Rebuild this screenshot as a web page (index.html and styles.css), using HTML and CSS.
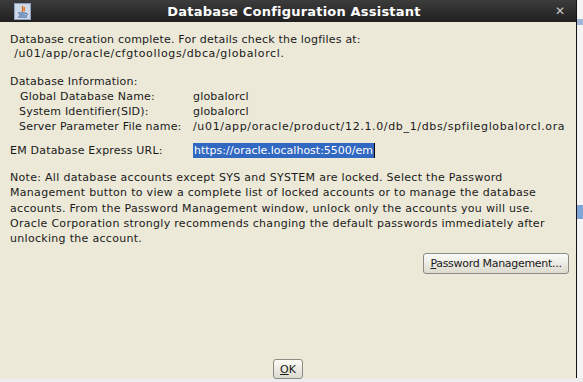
FILE: index.html
```html
<!DOCTYPE html>
<html lang="en">
<head>
  <meta charset="UTF-8" />
  <title>Database Configuration Assistant</title>
  <link rel="stylesheet" href="styles.css">
</head>
<body>

  <div class="screen">
    <div class="window">
      <div class="titlebar">
        <span class="app-icon">
          <svg width="17" height="17" viewBox="0 0 17 17">
            <rect x="0.5" y="0.5" width="16" height="16" fill="#cfd8e6" stroke="#8ea0bd"/>
            <path d="M9 3 C7 5 10 6 8 9 M10.5 4 C9.5 5.5 11 6 10 8" stroke="#e06a14" stroke-width="1.3" fill="none"/>
            <path d="M4 10 H12 M5 12 H11 M4 14 H13" stroke="#2b5a9a" stroke-width="1.2"/>
            <path d="M12 10.5 C14 10.5 14 12.5 11.5 12.5" stroke="#2b5a9a" stroke-width="1" fill="none"/>
          </svg>
        </span>
        <span class="title">Database Configuration Assistant</span>
        <span class="close">&#x2715;</span>
      </div>

      <div class="content">
        <p class="msg">Database creation complete. For details check the logfiles at:<br><span class="path">&nbsp;/u01/app/oracle/cfgtoollogs/dbca/globalorcl.</span></p>

        <div class="info">
          <div class="info-head">Database Information:</div>
          <div class="info-row">
            <span class="info-label first">Global Database Name:</span>
            <span class="info-value">globalorcl</span>
          </div>
          <div class="info-row">
            <span class="info-label">System Identifier(SID):</span>
            <span class="info-value">globalorcl</span>
          </div>
          <div class="info-row">
            <span class="info-label">Server Parameter File name:</span>
            <span class="info-value path">/u01/app/oracle/product/12.1.0/db_1/dbs/spfileglobalorcl.ora</span>
          </div>
        </div>

        <div class="url-row">
          <span class="url-label">EM Database Express URL:</span>
          <span class="url-field">https://oracle.localhost:5500/em</span>
        </div>

        <p class="note">Note: All database accounts except SYS and SYSTEM are locked. Select the Password<br>Management button to view a complete list of locked accounts or to manage the database<br>accounts. From the Password Management window, unlock only the accounts you will use.<br>Oracle Corporation strongly recommends changing the default passwords immediately after<br>unlocking the account.</p>

        <div class="actions">
          <button class="btn btn-pw"><u>P</u>assword Management...</button>
        </div>

        <div class="footer">
          <button class="btn btn-ok"><u>O</u>K</button>
        </div>
      </div>
    </div>
    <div class="behind">
      <div class="behind-strip top"></div>
      <div class="behind-strip mid"></div>
    </div>
  </div>
  <div class="desk"></div>

</body>
</html>
```

FILE: styles.css
```css
* {
  box-sizing: border-box;
}

body {
  margin: 0;
  padding: 0;
  background: #ededed;
  font-family: 'DejaVu Sans', sans-serif;
  font-size: 11px;
  color: #1a1a1a;
  width: 583px;
  height: 382px;
  overflow: hidden;
}

.screen {
  display: flex;
  height: 378px;
}

.window {
  width: 577px;
  height: 378px;
  display: flex;
  flex-direction: column;
  border-right: 1px solid #111;
  background: #ece9d8;
}

.titlebar {
  height: 22px;
  flex: none;
  display: flex;
  align-items: center;
  background: linear-gradient(#3c3c3c, #202020);
  color: #fff;
  padding: 0 14px;
}

.app-icon {
  width: 17px;
  height: 17px;
  display: flex;
}

.title {
  flex: 1;
  text-align: center;
  font-weight: bold;
  font-size: 13px;
  letter-spacing: 0.2px;
  padding-left: 2px;
}

.close {
  color: #c8c8c8;
  font-weight: bold;
  font-size: 12px;
  margin-right: -3px;
}

.content {
  flex: 1;
  display: flex;
  flex-direction: column;
  padding: 11px 0 0 10px;
  line-height: 15px;
  letter-spacing: 0.2px;
}

.msg {
  margin: 0;
  line-height: 14px;
}

.path {
  letter-spacing: 0.65px;
}

.info {
  margin-top: 13px;
}

.info-row {
  display: flex;
}

.info-label {
  width: 183px;
  padding-left: 9px;
}

.info-label.first {
  padding-left: 10px;
}

.url-row {
  display: flex;
  margin-top: 9px;
}

.url-label {
  width: 183px;
}

.url-field {
  background: #3168c1;
  color: #fff;
  padding: 0 1px;
  border-right: 1px solid #000;
  letter-spacing: 0;
}

.note {
  margin: 12px 0 0;
  line-height: 15.3px;
  letter-spacing: 0.3px;
  white-space: nowrap;
}

.actions {
  display: flex;
  justify-content: flex-end;
  margin-top: 7px;
  padding-right: 7px;
}

.btn {
  font-family: 'DejaVu Sans', sans-serif;
  font-size: 11px;
  letter-spacing: 0;
  color: #1a1a1a;
  background: linear-gradient(#fbfbf8, #dcdace);
  border: 1px solid #8b8b83;
  border-radius: 3px;
  height: 21px;
  padding: 0;
}

.btn-pw {
  width: 146px;
  letter-spacing: -0.3px;
}

.footer {
  margin-top: auto;
  display: flex;
  justify-content: center;
  padding-right: 10px;
}

.btn-ok {
  width: 30px;
  height: 20px;
  margin-bottom: -1px;
}

.behind {
  flex: 1;
  background: #f4f4f4;
  display: flex;
  flex-direction: column;
}

.behind-strip {
  height: 6px;
  background: #9fb8d8;
}

.behind-strip.top {
  margin-top: 19px;
}

.behind-strip.mid {
  margin-top: 180px;
  height: 14px;
  background: #7fa6d9;
}

.desk {
  height: 4px;
  background: #ededed;
}
```
